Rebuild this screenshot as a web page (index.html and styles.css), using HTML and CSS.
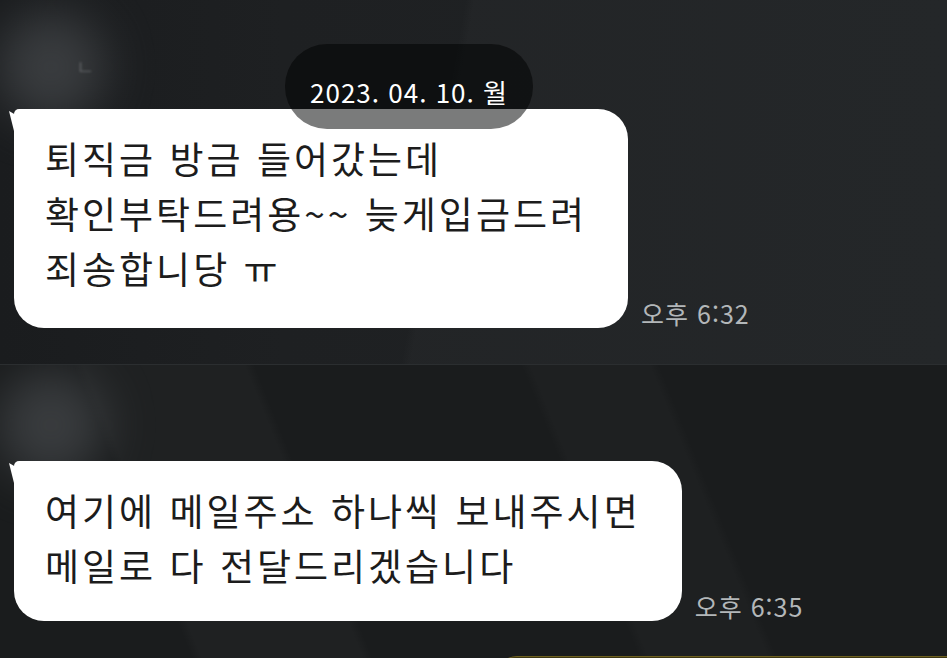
FILE: index.html
```html
<!DOCTYPE html>
<html lang="ko">
<head>
  <meta charset="UTF-8" />
  <meta name="viewport" content="width=device-width, initial-scale=1.0"/>
  <title>채팅</title>
  <link rel="stylesheet" href="styles.css">
</head>
<body>

  <div class="screen">
    <!-- Capture 1 -->
    <section class="day day-top">
      <div class="date-pill">2023. 04. 10. 월</div>
      <div class="sender">
        <span class="avatar"></span>
        <span class="name">ㄴ</span>
      </div>
      <div class="msg-row">
        <div class="bubble bubble-first">퇴직금 방금 들어갔는데<br>확인부탁드려용~~ 늦게입금드려<br>죄송합니당 ㅠ</div>
        <span class="time">오후 6:32</span>
      </div>
    </section>

    <!-- Capture 2 -->
    <section class="day day-bottom">
      <div class="sender sender-low">
        <span class="avatar"></span>
        <span class="name"></span>
      </div>
      <div class="msg-row">
        <div class="bubble">여기에 메일주소 하나씩 보내주시면<br>메일로 다 전달드리겠습니다</div>
        <span class="time">오후 6:35</span>
      </div>
      <div class="my-row">
        <div class="my-bubble"></div>
      </div>
    </section>
  </div>

</body>
</html>
```

FILE: styles.css
```css
* {
  box-sizing: border-box;
  margin: 0;
  padding: 0;
}

body {
  width: 947px;
  height: 658px;
  overflow: hidden;
  background: #1b1d1e;
  font-family: "Noto Sans CJK KR", "Noto Sans", sans-serif;
}

.screen {
  display: flex;
  flex-direction: column;
  width: 100%;
  height: 100%;
}

.day {
  position: relative;
  overflow: hidden;
}

.day-top {
  height: 365px;
  flex-shrink: 0;
  border-bottom: 1px solid #2b2e30;
  background:
    linear-gradient(100deg, transparent 0%, transparent 46%, rgba(255, 255, 255, 0.018) 47%, rgba(255, 255, 255, 0.02) 100%),
    linear-gradient(90deg, #1a1c1e 0%, #1e2022 30%, #202325 100%);
}

.day-bottom {
  flex: 1;
  background:
    linear-gradient(68deg, transparent 0%, transparent 18%, rgba(255, 255, 255, 0.025) 19%, rgba(255, 255, 255, 0.025) 34%, transparent 35%, transparent 100%),
    linear-gradient(68deg, transparent 0%, transparent 60%, rgba(255, 255, 255, 0.02) 61%, rgba(255, 255, 255, 0.02) 72%, transparent 73%),
    #1a1c1d;
}

/* floating date indicator */
.date-pill {
  position: absolute;
  top: 44px;
  left: 285px;
  z-index: 2;
  width: 248px;
  height: 85px;
  padding-top: 9px;
  border-radius: 42px;
  background: rgba(0, 2, 2, 0.52);
  color: #ffffff;
  font-size: 26px;
  letter-spacing: 1px;
  display: flex;
  justify-content: center;
  align-items: center;
}

/* blurred sender profile */
.sender {
  height: 109px;
  display: flex;
  align-items: center;
  padding: 24px 0 0 0;
}

.sender-low {
  height: 96px;
}

.avatar {
  width: 110px;
  height: 110px;
  margin-left: -4px;
  border-radius: 50%;
  background: #44474a;
  filter: blur(24px);
  opacity: 0.75;
}

.name {
  margin-left: -30px;
  color: #8a8d90;
  font-size: 20px;
  filter: blur(1px);
  opacity: 0.45;
}

.msg-row {
  display: flex;
  align-items: flex-end;
  gap: 13px;
  padding-left: 14px;
}

.bubble {
  position: relative;
  background: #ffffff;
  color: #1c1c1c;
  font-size: 37px;
  line-height: 55px;
  letter-spacing: 3px;
  white-space: nowrap;
  padding: 22px 41px 28px 31px;
  border-radius: 30px;
  border-top-left-radius: 5px;
}

.bubble-first {
  padding-bottom: 32px;
}

.bubble::before {
  content: "";
  position: absolute;
  left: -5px;
  top: 2px;
  width: 22px;
  height: 22px;
  background: #ffffff;
  clip-path: polygon(0 0, 70% 40%, 100% 100%, 25% 100%);
}

.time {
  margin-bottom: 2px;
  color: #b3b7b9;
  font-size: 25px;
  letter-spacing: 1px;
  line-height: 1;
  white-space: nowrap;
}

.my-row {
  display: flex;
  justify-content: flex-end;
  margin-top: 35px;
}

.my-bubble {
  width: 452px;
  height: 60px;
  border-top-left-radius: 22px;
  border-top: 1px solid #6e6120;
  background: #3f3814;
}
```
